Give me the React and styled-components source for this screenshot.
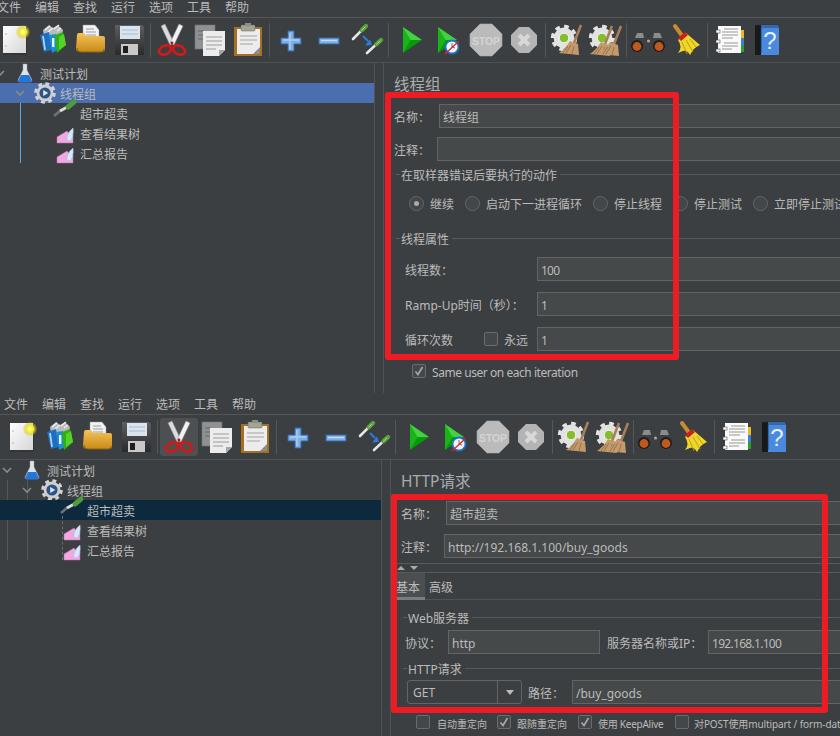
import React from "react";
import styled, { createGlobalStyle } from "styled-components";

const FONT = '"Noto Sans", "Noto Sans CJK SC", sans-serif';

const GlobalStyle = createGlobalStyle`
  html, body {
    margin: 0;
    padding: 0;
    width: 840px;
    height: 736px;
    overflow: hidden;
    background: #3c3f41;
  }
`;

const Page = styled.div`
  position: relative;
  width: 840px;
  height: 736px;
  overflow: hidden;
  font-family: ${FONT};
  font-size: 12px;
  color: #bbbbbb;
  background: #3c3f41;
`;

const Window = styled.div`
  width: ${(p) => p.$width}px;
  height: ${(p) => p.$height}px;
  margin-left: ${(p) => p.$shift}px;
  display: flex;
  flex-direction: column;
  overflow: hidden;
`;

const MenuBar = styled.div`
  height: ${(p) => p.$height}px;
  flex: none;
  display: flex;
  align-items: center;
  gap: 14px;
  padding: 0 0 ${(p) => (p.$height > 18 ? 0 : 3)}px 4px;
  border-bottom: 1px solid #555555;
  line-height: 14px;
`;

const MenuItem = styled.span`
  width: 24px;
  padding-top: 2px;
  white-space: nowrap;
`;

const ToolBar = styled.div`
  height: 44px;
  flex: none;
  display: flex;
  align-items: center;
  padding-left: 3px;
  border-bottom: 1px solid #4f5254;
`;

const ToolCell = styled.div`
  width: 38px;
  height: 38px;
  flex: none;
  display: flex;
  align-items: center;
  justify-content: center;
  border-radius: 3px;
  background: ${(p) => (p.$active ? "#4c5052" : "transparent")};

  svg {
    display: block;
    flex: none;
  }
`;

const ToolSep = styled.div`
  width: 1px;
  height: 34px;
  flex: none;
  margin: 0 2px;
  background: #54575a;
`;

const Main = styled.div`
  flex: 1;
  min-height: 0;
  display: flex;
`;

const TreePane = styled.div`
  position: relative;
  width: 381px;
  flex: none;
  border-right: 1px solid #505355;
`;

const TreeRow = styled.div`
  height: 20px;
  display: flex;
  align-items: center;
  padding-left: ${(p) => p.$depth * 20}px;
  background: ${(p) => p.$selected || "transparent"};
  position: relative;
  z-index: 1;
`;

const TreeText = styled.span`
  padding-top: 2px;
`;

const Chevron = styled.svg`
  width: 14px;
  height: 20px;
  flex: none;
  margin-right: 6px;
`;

const TreeIconBox = styled.div`
  width: 24px;
  height: 20px;
  flex: none;
  margin-right: 3px;

  svg {
    display: block;
    overflow: visible;
  }
`;

const TreeGuide = styled.div`
  position: absolute;
  left: ${(p) => p.$x}px;
  top: ${(p) => p.$top}px;
  height: ${(p) => p.$h}px;
  width: 0;
  border-left: 1px ${(p) => (p.$dashed ? "dashed" : "solid")} ${(p) => p.$color};
  z-index: ${(p) => (p.$over ? 2 : 0)};
`;

const Gutter = styled.div`
  width: 8px;
  flex: none;
`;

const Panel = styled.div`
  flex: 1;
  min-width: 0;
  border-left: 1px solid #505355;
  padding: 11px 0 0 10px;
  overflow: hidden;
`;

const Heading = styled.div`
  height: 20px;
  line-height: 20px;
  font-size: 15.5px;
  color: #a9adb0;
  margin-bottom: 10px;
`;

const Row = styled.div`
  display: flex;
  align-items: center;
  margin-top: ${(p) => p.$top || 0}px;
  margin-right: -12px;
  padding-left: ${(p) => p.$inset || 0}px;
`;

const Label = styled.span`
  width: ${(p) => (p.$width ? `${p.$width}px` : "auto")};
  flex: none;
  box-sizing: border-box;
  padding: 2px 0 0 ${(p) => p.$pad || 0}px;
  white-space: nowrap;
  letter-spacing: ${(p) => p.$spacing || 0}px;
`;

const Input = styled.div`
  height: 24px;
  box-sizing: border-box;
  flex: ${(p) => (p.$width ? "none" : 1)};
  width: ${(p) => (p.$width ? `${p.$width}px` : "auto")};
  border: 1px solid #646464;
  background: #45494a;
  padding-left: 3px;
  line-height: 25px;
  white-space: nowrap;
  color: #bbbbbb;
  letter-spacing: ${(p) => p.$spacing || 0}px;
`;

const GroupTitle = styled.div`
  height: 16px;
  box-sizing: border-box;
  padding-top: 2px;
  line-height: 14px;
  display: flex;
  align-items: center;
  margin: ${(p) => p.$top}px -12px 0 2px;
  white-space: nowrap;

  &::before {
    content: "";
    width: 4px;
    height: 1px;
    margin: 0 1px 3px 0;
    background: #57595b;
  }

  &::after {
    content: "";
    flex: 1;
    height: 1px;
    margin: 0 0 3px 3px;
    background: #57595b;
  }
`;

const RadioRow = styled.div`
  display: flex;
  align-items: center;
  height: 16px;
  margin-top: ${(p) => p.$top}px;
  padding-left: 15px;
  white-space: nowrap;
`;

const RadioDot = styled.span`
  width: 15px;
  height: 15px;
  flex: none;
  box-sizing: border-box;
  border-radius: 50%;
  border: 1px solid #666666;
  background: #43474a;
  display: flex;
  align-items: center;
  justify-content: center;
  margin: 0 6px 0 ${(p) => (p.$first ? 0 : 11)}px;

  &::after {
    content: "";
    display: ${(p) => (p.$on ? "block" : "none")};
    width: 5px;
    height: 5px;
    border-radius: 50%;
    background: #aaaaaa;
  }
`;

const CheckRow = styled.div`
  display: flex;
  align-items: center;
  height: 16px;
  margin-top: ${(p) => p.$top}px;
  padding-left: ${(p) => p.$inset}px;
  white-space: nowrap;
  font-size: ${(p) => p.$size || 12}px;
`;

const CheckBoxWrap = styled.span`
  width: 14px;
  height: 14px;
  flex: none;
  box-sizing: border-box;
  border: 1px solid #6b6b6b;
  border-radius: 2px;
  background: #43474a;
  margin: ${(p) => p.$margin};
  display: flex;
  align-items: center;
  justify-content: center;
`;

const Splitter = styled.div`
  height: 8px;
  margin: 5px 0 0 -5px;
  border-top: 1px solid #57595b;
  border-bottom: 1px solid #57595b;
  display: flex;
  align-items: center;
  gap: 5px;
  padding-left: 1px;
`;

const ArrowUp = styled.span`
  width: 0;
  height: 0;
  border-left: 4px solid transparent;
  border-right: 4px solid transparent;
  border-bottom: 4px solid #aaaaaa;
`;

const ArrowDown = styled.span`
  width: 0;
  height: 0;
  border-left: 4px solid transparent;
  border-right: 4px solid transparent;
  border-top: 4px solid #aaaaaa;
`;

const Tabs = styled.div`
  height: 27px;
  box-sizing: border-box;
  margin-left: -5px;
  display: flex;
  border-bottom: 1px solid #505355;
`;

const Tab = styled.div`
  height: 27px;
  box-sizing: border-box;
  line-height: 29px;
  padding: ${(p) => (p.$active ? "0 5px 0 0" : "0 0 0 4px")};
  background: ${(p) => (p.$active ? "#4b4f51" : "transparent")};
  border-bottom: ${(p) => (p.$active ? "3px solid #797d80" : "none")};
`;

const Combo = styled.div`
  width: 115px;
  height: 24px;
  flex: none;
  box-sizing: border-box;
  border: 1px solid #646464;
  border-radius: 3px;
  background: #3c3f41;
  display: flex;
  line-height: 24px;
`;

const ComboText = styled.span`
  flex: 1;
  padding-left: 5px;
`;

const ComboButton = styled.span`
  width: 23px;
  border-left: 1px solid #646464;
  display: flex;
  align-items: center;
  justify-content: center;

  &::after {
    content: "";
    border-left: 4px solid transparent;
    border-right: 4px solid transparent;
    border-top: 5px solid #bbbbbb;
  }
`;

const RedFrame = styled.div`
  position: absolute;
  left: ${(p) => p.$x}px;
  top: ${(p) => p.$y}px;
  width: ${(p) => p.$w}px;
  height: ${(p) => p.$h}px;
  box-sizing: border-box;
  border: 6px solid #ed1c24;
  border-radius: 3px;
  pointer-events: none;
  z-index: 5;
`;

/* toolbar drawings: every one is laid out on a 38x44 cell */
const Tool = ({ children }) => (
  <svg width="38" height="44" viewBox="0 0 38 44">
    {children}
  </svg>
);

const IconNew = () => (
  <Tool>
    <defs>
      <linearGradient id="paper" x1="0" y1="0" x2="1" y2="1">
        <stop offset="0" stopColor="#ffffff" />
        <stop offset="1" stopColor="#d6d6d6" />
      </linearGradient>
      <radialGradient id="glow">
        <stop offset="0" stopColor="#ffffb0" />
        <stop offset="0.5" stopColor="#f6ec2c" />
        <stop offset="1" stopColor="#c8b820" stopOpacity="0.15" />
      </radialGradient>
    </defs>
    <rect x="7" y="9" width="24" height="28" fill="#222" opacity="0.35" />
    <rect x="7" y="8" width="23" height="27" fill="url(#paper)" />
    <circle cx="10" cy="16" r="0.8" fill="#aaa" />
    <circle cx="10" cy="28" r="0.8" fill="#aaa" />
    <circle cx="27" cy="14" r="7" fill="url(#glow)" />
  </Tool>
);

const IconTemplates = () => (
  <Tool>
    <path d="M9 12l6-5 4 3 5-3 5 5-3 15-15-2z" fill="#b9bcbe" />
    <path d="M11 12l5-4M14 14l5-4M20 11l5-4M23 13l4-3" stroke="#eee" strokeWidth="1.4" />
    <path d="M6 17l9-3 3 18-8 2z" fill="#1d6fc4" />
    <path d="M9 18l2 14" stroke="#a9d0f5" strokeWidth="1.8" />
    <path d="M15 17l7-1 2 16-6 3z" fill="#1f8fd0" />
    <path d="M21 17l8-3 3 13-9 8z" fill="#2fb012" />
    <path d="M25 19l5-3 2 11-7 5z" fill="#54d22a" />
    <rect x="18" y="20" width="2.4" height="9" fill="#e8f4ff" />
  </Tool>
);

const IconOpen = () => (
  <Tool>
    <defs>
      <linearGradient id="fold" x1="0" y1="0" x2="0" y2="1">
        <stop offset="0" stopColor="#f4c35a" />
        <stop offset="1" stopColor="#c98a16" />
      </linearGradient>
    </defs>
    <path d="M11 7h12l4 5v12H11z" fill="#f2f2f2" stroke="#999" strokeWidth="0.5" />
    <path d="M14 11h8M14 14h10M14 17h10" stroke="#9a9a9a" strokeWidth="1" />
    <path d="M5 17q0-2 2-2h5l2 3h17q2 0 2 2v11q0 3-3 3H8q-4 0-4-4z" fill="url(#fold)" />
    <path d="M5 30q0 4 4 4h20q3 0 3-3" fill="none" stroke="#8d6210" strokeWidth="1" />
  </Tool>
);

const IconSave = () => (
  <Tool>
    <defs>
      <linearGradient id="disk" x1="0" y1="0" x2="0" y2="1">
        <stop offset="0" stopColor="#5c5e61" />
        <stop offset="1" stopColor="#2a2a2a" />
      </linearGradient>
    </defs>
    <path d="M5 7h27l2 2v28H5z" fill="url(#disk)" />
    <rect x="10" y="8" width="20" height="13" fill="#dbe3ec" />
    <path d="M12 12h16M12 16h16" stroke="#a7bdd6" strokeWidth="1" />
    <rect x="11" y="26" width="17" height="11" fill="#c8c8c8" />
    <rect x="13" y="28" width="5" height="7" fill="#1e1e1e" />
  </Tool>
);

const IconCut = () => (
  <Tool>
    <path d="M8 8l4-2 9 19-4 2z" fill="#dcdcdc" stroke="#8d8d8d" strokeWidth="0.5" />
    <path d="M30 8l-4-2-9 19 4 2z" fill="#f2f2f2" stroke="#8d8d8d" strokeWidth="0.5" />
    <circle cx="19" cy="25" r="1.4" fill="#b01414" />
    <ellipse cx="12" cy="32" rx="6.4" ry="4.2" fill="none" stroke="#cf1a1a" strokeWidth="2.8" transform="rotate(-25 12 32)" />
    <ellipse cx="26" cy="32" rx="6.4" ry="4.2" fill="none" stroke="#cf1a1a" strokeWidth="2.8" transform="rotate(25 26 32)" />
  </Tool>
);

const IconCopy = () => (
  <Tool>
    <rect x="4" y="7" width="20" height="24" fill="#8f9193" stroke="#747678" strokeWidth="0.6" />
    <path d="M7 13h6M7 17h6M7 21h6" stroke="#65676a" strokeWidth="1" />
    <path d="M12 13h22v19l-6 6H12z" fill="#ececec" />
    <path d="M34 32l-6 6v-6z" fill="#a5a5a5" />
    <path d="M15 19h16M15 23h16M15 27h16M15 31h10" stroke="#9c9c9c" strokeWidth="1" />
  </Tool>
);

const IconPaste = () => (
  <Tool>
    <rect x="5" y="9" width="28" height="29" fill="#a66f22" />
    <rect x="8" y="11" width="23" height="25" fill="#ececec" />
    <path d="M11 18h17M11 22h17M11 26h13" stroke="#a5a5a5" strokeWidth="1" />
    <path d="M31 29v7h-7z" fill="#8d8d8d" />
    <rect x="12" y="7" width="14" height="6" rx="1" fill="#a3a396" stroke="#6f6f66" strokeWidth="0.5" />
    <rect x="16" y="5" width="6" height="3" fill="#8d8d82" />
  </Tool>
);

const IconPlus = () => (
  <Tool>
    <path d="M16 13h6v7h7v6h-7v7h-6v-7H9v-6h7z" fill="#7eaee2" stroke="#2f68ae" strokeWidth="1" />
    <path d="M18 15v16M11 22h16" stroke="#c4dcf5" strokeWidth="1.4" opacity="0.7" />
  </Tool>
);

const IconMinus = () => (
  <Tool>
    <rect x="9" y="20" width="20" height="6" fill="#7eaee2" stroke="#2f68ae" strokeWidth="1" />
    <path d="M11 22.5h16" stroke="#c4dcf5" strokeWidth="1.4" />
  </Tool>
);

const Dropper = ({ x1, y1, x2, y2, w = 3 }) => {
  const mx = x1 + (x2 - x1) * 0.68;
  const my = y1 + (y2 - y1) * 0.68;
  return (
    <g strokeLinecap="round">
      <line x1={x1} y1={y1} x2={mx} y2={my} stroke="#e8e8e8" strokeWidth={w - 0.4} />
      <line x1={mx} y1={my} x2={x2} y2={y2} stroke="#5aa03c" strokeWidth={w + 1.4} />
      <line x1={mx} y1={my} x2={x2 - 1} y2={y2 + 1} stroke="#a9d98c" strokeWidth={1} />
    </g>
  );
};

const IconMove = () => (
  <Tool>
    <Dropper x1={5} y1={21} x2={18} y2={8} />
    <Dropper x1={19} y1={35} x2={33} y2={22} />
    <path d="M15 18l5 5" stroke="#2b7de0" strokeWidth="1.8" />
    <path d="M24 27l-7 0.5 5-6z" fill="#2b7de0" />
  </Tool>
);

const GreenPlay = ({ x = 12, w = 19 }) => (
  <g>
    <path d={`M${x} 9L${x + w} 22 ${x} 22z`} fill="#44d243" />
    <path d={`M${x} 22L${x + w} 22 ${x} 35z`} fill="#079a0b" />
    <path d={`M${x} 9l${w * 0.4} 13-${w * 0.4} 13z`} fill="#18b41a" />
  </g>
);

const IconPlay = () => (
  <Tool>
    <GreenPlay />
  </Tool>
);

const IconPlayNoTimer = () => (
  <Tool>
    <GreenPlay x={9} w={19} />
    <circle cx="23" cy="29" r="6.5" fill="#f1f5fb" stroke="#1f6fcf" strokeWidth="1.8" />
    <path d="M23 25v4l3 1" stroke="#555" strokeWidth="0.8" fill="none" />
    <path d="M16 36l14-13" stroke="#e0241c" strokeWidth="1.3" />
  </Tool>
);

const StopText = styled.text`
  font-family: "Liberation Sans", sans-serif;
  font-weight: 700;
  font-size: 11.5px;
  fill: #d4d4d4;
`;

const IconStop = () => (
  <Tool>
    <path d="M13 6h12l10 10v12L25 38H13L3 28V16z" fill="#bbbbbb" stroke="#a8a8a8" strokeWidth="0.6" />
    <StopText x="19" y="26.5" textAnchor="middle" textLength="28" lengthAdjust="spacingAndGlyphs">
      STOP
    </StopText>
  </Tool>
);

const IconShut = () => (
  <Tool>
    <path d="M14 9h10l8 8v10l-8 8H14l-8-8V17z" fill="#b4b4b4" />
    <path d="M14 17l10 10M24 17L14 27" stroke="#d8d8d8" strokeWidth="4" />
  </Tool>
);

const Cog = ({ cx = 16, cy = 20 }) => (
  <g>
    <circle cx={cx} cy={cy} r="11.5" fill="none" stroke="#e4e4e4" strokeWidth="3.4" strokeDasharray="4.6 4.4" />
    <circle cx={cx} cy={cy} r="10.4" fill="#e2e2e2" />
    <circle cx={cx} cy={cy} r="4.8" fill="#86bd2c" stroke="#f6f6f6" strokeWidth="1" />
  </g>
);

const Brush = ({ dx = 0, dy = 0 }) => (
  <g transform={`translate(${dx} ${dy})`}>
    <path d="M33 7l-7 18" stroke="#a77f56" strokeWidth="2.6" />
    <path d="M22 23l8 3 1 11-20-2q6-4 11-12z" fill="#c39a6b" />
    <path d="M23 27l-5 8M26 28l-2 8M20 28l-5 7" stroke="#8d6a45" strokeWidth="0.8" />
  </g>
);

const IconClear = () => (
  <Tool>
    <Cog />
    <Brush />
  </Tool>
);

const IconClearAll = () => (
  <Tool>
    <Cog />
    <Brush dx={-7} dy={1} />
    <Brush dx={2} dy={1} />
  </Tool>
);

const IconSearch = () => (
  <Tool>
    <path d="M8 15h6l3 4h5l3-4h6l5 13-3 7H26l-4-6h-5l-4 6H4l-3-7z" fill="#3d3f41" />
    <path d="M8 15h6l1 5H6zM25 15h6l2 5h-9z" fill="#8a8c8e" />
    <circle cx="19.5" cy="23" r="1.5" fill="#aaaaaa" />
    <circle cx="8" cy="28" r="6" fill="#1d1d1d" />
    <circle cx="8" cy="28.5" r="4.4" fill="#c0581f" />
    <circle cx="30" cy="28" r="6" fill="#1d1d1d" />
    <circle cx="30" cy="28.5" r="4.4" fill="#c0581f" />
  </Tool>
);

const IconBroom = () => (
  <Tool>
    <path d="M8 8l8 11" stroke="#c98b2f" strokeWidth="4" strokeLinecap="round" />
    <path d="M11 22l8-7 14 12q-6 2-10 10-3-5-7-4l-5 2q5-6 0-13z" fill="#efd62a" />
    <path d="M15 24l5 12M19 22l7 12M23 21l6 8" stroke="#b8991a" strokeWidth="0.9" />
    <path d="M11 20l7-6 3 3-7 6z" fill="#c6201f" />
  </Tool>
);

const IconLog = () => (
  <Tool>
    <rect x="31" y="12" width="3" height="8" fill="#e9bb1d" />
    <rect x="31" y="20" width="3" height="7" fill="#3c7fd9" />
    <rect x="31" y="27" width="3" height="7" fill="#2fa02c" />
    <rect x="8" y="8" width="23" height="27" fill="#fafafa" />
    <path d="M14 11h14M12 14h16M12 17h16M12 20h11M14 25h14M12 28h16M12 31h10" stroke="#8c8c8c" strokeWidth="0.9" />
    <rect x="6" y="12" width="4" height="3" fill="#fff" stroke="#333" strokeWidth="0.5" />
    <rect x="6" y="22" width="4" height="3" fill="#fff" stroke="#333" strokeWidth="0.5" />
    <rect x="6" y="31" width="4" height="3" fill="#fff" stroke="#333" strokeWidth="0.5" />
  </Tool>
);

const HelpMark = styled.text`
  font-family: "Liberation Sans", sans-serif;
  font-size: 24px;
  fill: #e6f0fb;
`;

const IconHelp = () => (
  <Tool>
    <rect x="7" y="7" width="24" height="30" rx="1" fill="#4a8ade" />
    <rect x="7" y="7" width="6" height="30" fill="#17191b" />
    <path d="M7 7h24v2H13v26" fill="none" stroke="#1c3554" strokeWidth="0.8" />
    <HelpMark x="22" y="31" textAnchor="middle">
      ?
    </HelpMark>
  </Tool>
);

/* tree drawings: 24x20 */
const TreeSvg = ({ children }) => (
  <svg width="24" height="20" viewBox="0 0 24 20">
    {children}
  </svg>
);

const IconFlask = () => (
  <TreeSvg>
    <path d="M10 1h4v6l5 10q0 2-2 2H7q-2 0-2-2l5-10z" fill="#dfe4ea" stroke="#9aa2aa" strokeWidth="0.5" />
    <path d="M8 12h8l3 6q0 1-2 1H7q-2 0-2-1z" fill="#1f78dc" />
  </TreeSvg>
);

const IconGear = () => (
  <TreeSvg>
    <circle cx="12" cy="10" r="9.4" fill="none" stroke="#d4d4d4" strokeWidth="2.8" strokeDasharray="3.9 3.5" />
    <circle cx="12" cy="10" r="8.4" fill="#cfcfcf" />
    <circle cx="12" cy="10" r="5.6" fill="#2c5488" />
    <path d="M10.2 7l5 3-5 3z" fill="#dbe8f6" />
  </TreeSvg>
);

const IconSampler = () => (
  <TreeSvg>
    <line x1="1" y1="13" x2="8" y2="7" stroke="#6f7173" strokeWidth="2.6" />
    <line x1="7" y1="8" x2="16" y2="3" stroke="#dcdcdc" strokeWidth="3" />
    <line x1="15" y1="4" x2="21" y2="-1" stroke="#4f9a3a" strokeWidth="5" strokeLinecap="round" />
  </TreeSvg>
);

const IconGraph = () => (
  <TreeSvg>
    <path d="M4 20v-6l10-6 4 5 2-1v8z" fill="#f0a8e0" stroke="#c46cb0" strokeWidth="0.5" />
    <path d="M14 17q-1-6 6-12 1 9-3 13z" fill="#d7e8fb" stroke="#a5c5ec" strokeWidth="0.6" />
  </TreeSvg>
);

const ChevronDown = () => (
  <Chevron viewBox="0 0 14 20">
    <path d="M3 8l4 4 4-4" fill="none" stroke="#888b8d" strokeWidth="1.6" />
  </Chevron>
);

const TickBox = ({ checked, margin }) => (
  <CheckBoxWrap $margin={margin}>
    {checked && (
      <svg width="10" height="10" viewBox="0 0 10 10">
        <path d="M1.5 5.5l2.5 3L8.5 1" fill="none" stroke="#a9a9a9" strokeWidth="1.6" />
      </svg>
    )}
  </CheckBoxWrap>
);

const toolGroups = [
  [IconNew, IconTemplates, IconOpen, IconSave],
  [IconCut, IconCopy, IconPaste],
  [IconPlus, IconMinus, IconMove],
  [IconPlay, IconPlayNoTimer, IconStop, IconShut],
  [IconClear, IconClearAll],
  [IconSearch, IconBroom],
  [IconLog, IconHelp],
];

const menus = ["文件", "编辑", "查找", "运行", "选项", "工具", "帮助"];

const Toolbar = ({ activeCut }) => (
  <ToolBar>
    {toolGroups.map((group, g) => (
      <React.Fragment key={g}>
        {g > 0 && <ToolSep />}
        {group.map((Icon, i) => (
          <ToolCell key={i} $active={activeCut && Icon === IconCut}>
            <Icon />
          </ToolCell>
        ))}
      </React.Fragment>
    ))}
  </ToolBar>
);

const Tree = ({ selected, selectedColor, guides }) => {
  const rows = [
    { depth: 0, icon: IconFlask, text: "测试计划", open: true },
    { depth: 1, icon: IconGear, text: "线程组", open: true },
    { depth: 2, icon: IconSampler, text: "超市超卖" },
    { depth: 2, icon: IconGraph, text: "查看结果树" },
    { depth: 2, icon: IconGraph, text: "汇总报告" },
  ];
  return (
    <TreePane>
      {rows.map((r, i) => {
        const Icon = r.icon;
        return (
          <TreeRow key={r.text} $depth={r.depth} $selected={i === selected ? selectedColor : null}>
            {r.open ? <ChevronDown /> : <Chevron as="span" />}
            <TreeIconBox>
              <Icon />
            </TreeIconBox>
            <TreeText>{r.text}</TreeText>
          </TreeRow>
        );
      })}
      {guides}
    </TreePane>
  );
};

const JMeter = ({ shift, width, height, menuHeight, activeCut, selected, selectedColor, guides, children }) => (
  <Window $shift={shift} $width={width} $height={height}>
    <MenuBar $height={menuHeight}>
      {menus.map((m) => (
        <MenuItem key={m}>{m}</MenuItem>
      ))}
    </MenuBar>
    <Toolbar activeCut={activeCut} />
    <Main>
      <Tree selected={selected} selectedColor={selectedColor} guides={guides} />
      <Gutter />
      <Panel>{children}</Panel>
    </Main>
  </Window>
);

const ThreadGroupForm = () => (
  <>
    <Heading>线程组</Heading>
    <Row>
      <Label $width={45}>名称：</Label>
      <Input>线程组</Input>
    </Row>
    <Row $top={9}>
      <Label $width={43}>注释：</Label>
      <Input />
    </Row>
    <GroupTitle $top={6}>在取样器错误后要执行的动作</GroupTitle>
    <RadioRow $top={12}>
      <RadioDot $first $on />
      <Label>继续</Label>
      <RadioDot />
      <Label>启动下一进程循环</Label>
      <RadioDot />
      <Label>停止线程</Label>
      <RadioDot />
      <Label>停止测试</Label>
      <RadioDot />
      <Label>立即停止测试</Label>
    </RadioRow>
    <GroupTitle $top={20}>线程属性</GroupTitle>
    <Row $top={10} $inset={11}>
      <Label $width={132}>线程数：</Label>
      <Input $spacing={-0.8}>100</Input>
    </Row>
    <Row $top={11} $inset={11}>
      <Label $width={132}>Ramp-Up时间（秒）：</Label>
      <Input>1</Input>
    </Row>
    <Row $top={11} $inset={11}>
      <Label $width={72}>循环次数</Label>
      <TickBox margin="0 6px 0 7px" />
      <Label $width={33}>永远</Label>
      <Input>1</Input>
    </Row>
    <CheckRow $top={12} $inset={18}>
      <TickBox checked margin="0 6px 0 0" />
      <Label $spacing={-0.45}>Same user on each iteration</Label>
    </CheckRow>
  </>
);

const HttpForm = () => (
  <>
    <Heading>HTTP请求</Heading>
    <Row>
      <Label $width={45}>名称：</Label>
      <Input>超市超卖</Input>
    </Row>
    <Row $top={9}>
      <Label $width={43}>注释：</Label>
      <Input>http://192.168.1.100/buy_goods</Input>
    </Row>
    <Splitter>
      <ArrowUp />
      <ArrowDown />
    </Splitter>
    <Tabs>
      <Tab $active>基本</Tab>
      <Tab>高级</Tab>
    </Tabs>
    <GroupTitle $top={10}>Web服务器</GroupTitle>
    <Row $top={4} $inset={4}>
      <Label $width={43}>协议：</Label>
      <Input $width={152}>http</Input>
      <Label $width={108} $pad={7}>
        服务器名称或IP：
      </Label>
      <Input $spacing={-0.7}>192.168.1.100</Input>
    </Row>
    <GroupTitle $top={7}>HTTP请求</GroupTitle>
    <Row $top={3} $inset={6}>
      <Combo>
        <ComboText>GET</ComboText>
        <ComboButton />
      </Combo>
      <Label $width={50} $pad={6}>
        路径：
      </Label>
      <Input>/buy_goods</Input>
    </Row>
    <CheckRow $top={10} $inset={15} $size={10}>
      <TickBox margin="0 7px 0 0" />
      <Label $width={48}>自动重定向</Label>
      <TickBox checked margin="0 6px 0 12px" />
      <Label $width={49}>跟随重定向</Label>
      <TickBox checked margin="0 6px 0 12px" />
      <Label $width={65} $spacing={-0.25}>
        使用 KeepAlive
      </Label>
      <TickBox margin="0 5px 0 12px" />
      <Label $spacing={-0.1}>对POST使用multipart / form-data</Label>
    </CheckRow>
  </>
);

const App = () => (
  <Page>
    <GlobalStyle />
    <JMeter
      shift={-7}
      width={847}
      height={393}
      menuHeight={14}
      selected={1}
      selectedColor="#4b6eaf"
      guides={<TreeGuide $x={27} $top={40} $h={60} $color="#5ba9f5" />}
    >
      <ThreadGroupForm />
    </JMeter>
    <JMeter
      shift={0}
      width={840}
      height={343}
      menuHeight={21}
      activeCut
      selected={2}
      selectedColor="#0d293e"
      guides={
        <>
          <TreeGuide $x={7} $top={20} $h={80} $color="#55585a" />
          <TreeGuide $x={27} $top={20} $h={80} $color="#55585a" />
          <TreeGuide $x={62} $top={56} $h={44} $color="#6a6d6f" $dashed $over />
        </>
      }
    >
      <HttpForm />
    </JMeter>
    <RedFrame $x={385} $y={92} $w={294} $h={268} />
    <RedFrame $x={391} $y={494} $w={437} $h={219} />
  </Page>
);

export default App;
